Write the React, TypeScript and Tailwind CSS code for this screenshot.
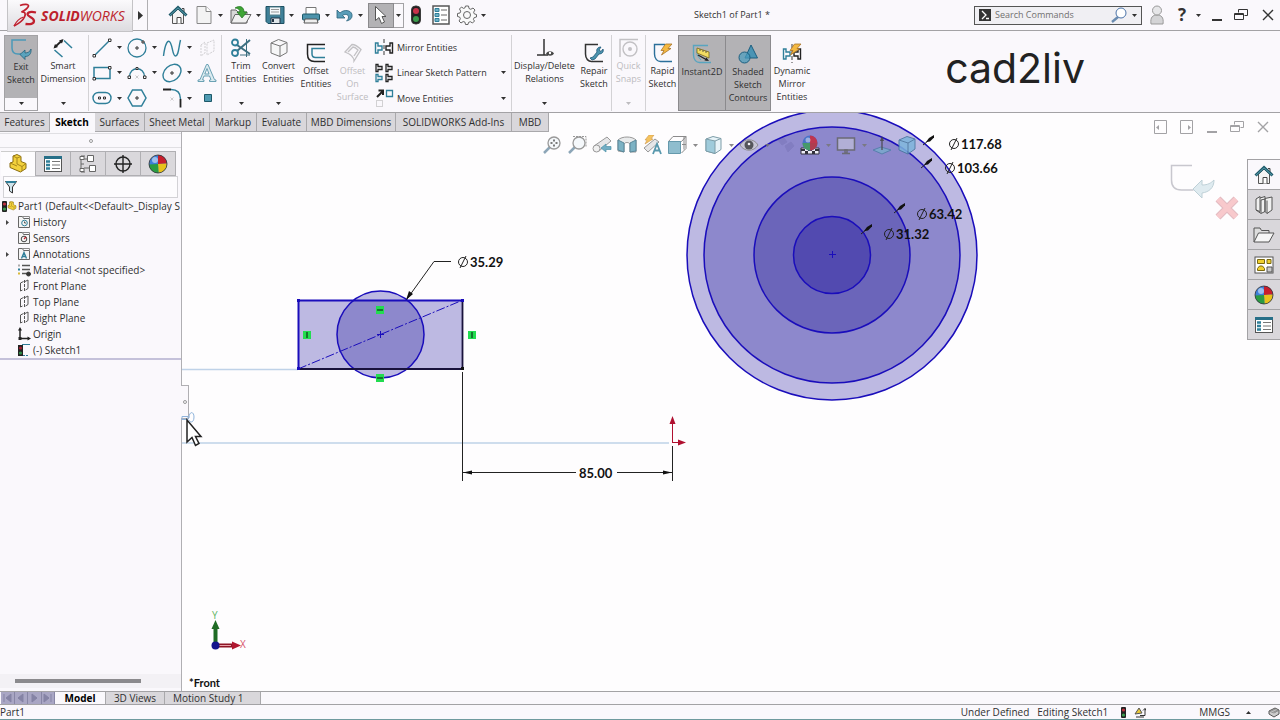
import type { ReactNode } from 'react'

function Svg({ w = 20, h = 20, children }: { w?: number; h?: number; children: ReactNode }) {
  return (
    <svg width={w} height={h} viewBox={`0 0 ${w} ${h}`} fill="none" stroke="#3b3b3b" className="shrink-0" aria-hidden="true">
      {children}
    </svg>
  )
}

function Caret() {
  return (
    <svg width="5" height="3" viewBox="0 0 5 3" className="shrink-0" aria-hidden="true">
      <path d="M0 0h5L2.5 3z" fill="currentColor" />
    </svg>
  )
}

const teal = '#2f7f99'
const dark = '#333'

/* shared icons */

function HomeIcon() {
  return (
    <Svg>
      <path d="M4.500 9v9.500h11V9L10 4z" fill="#f4f4f4" stroke="#555" />
      <path d="M14 3.500h2v4" stroke="#444" fill="#ddd" />
      <path d="M1.500 10.500 10 2.500l8.500 8" stroke="#1d5868" strokeWidth="3" />
      <path d="M2 10.200 10 2.800l8 7.400" stroke="#5ba3b3" strokeWidth="1" />
      <path d="M9 18.500v-6h4v6" stroke="#444" fill="#fff" />
    </Svg>
  )
}

function BallIcon({ size = 20 }: { size?: number }) {
  return (
    <svg width={size} height={size} viewBox="0 0 20 20" className="shrink-0" aria-hidden="true">
      <circle cx="10" cy="10" r="9" fill="#3d7fd8" />
      <path d="M10 10V1a9 9 0 0 1 9 8.500z" fill="#c81e2c" />
      <path d="M10 10l9-.5A9 9 0 0 1 10.500 19z" fill="#e8c21c" />
      <path d="M10 10l.5 9A9 9 0 0 1 1 10.500z" fill="#2a9c42" />
      <circle cx="7" cy="6" r="3" fill="#fff" opacity=".5" />
      <circle cx="10" cy="10" r="9" fill="none" stroke="#333" strokeWidth=".8" />
    </svg>
  )
}

function ListIcon() {
  return (
    <Svg>
      <rect x="1.500" y="2.500" width="17" height="15" fill="#fff" stroke="#555" />
      <path d="M1 3.500h18" stroke="#276f88" strokeWidth="3" />
      <path d="M3 7.500h4M3 11h4M3 14.500h4" stroke={teal} strokeWidth="2.400" />
      <path d="M9 7.500h8M9 11h8M9 14.500h8" stroke="#777" />
    </Svg>
  )
}

function PropertiesIcon() {
  return (
    <Svg>
      <rect x="2" y="1" width="16" height="18" fill="#fff" stroke="#555" strokeWidth="1.500" />
      <path d="M4 3.500h4v3H4zM4 8.500h4v3H4zM4 13.500h4v3H4z" fill="#6fb0c6" stroke={teal} />
      <path d="M10 5h6M10 10h6M10 15h6" stroke="#666" />
    </Svg>
  )
}

function TrafficLight() {
  return (
    <Svg w={10} h={20}>
      <rect x=".5" y="1" width="9" height="18" rx="4" fill="#222" />
      <circle cx="5" cy="6" r="3" fill="#c8324a" stroke="none" />
      <circle cx="5" cy="14" r="3" fill="#3a9c4c" stroke="none" />
    </Svg>
  )
}

function RestoreIcon() {
  return (
    <Svg w={14} h={12}>
      <path d="M4.500 3.500v-3h9v6h-3M.5 4.500h9v6h-9zM.5 5.500h9" stroke="currentColor" />
    </Svg>
  )
}

function CloseIcon() {
  return (
    <Svg w={12} h={12}>
      <path d="M1 1l10 10M11 1 1 11" stroke="currentColor" strokeWidth="1.400" />
    </Svg>
  )
}

function MinIcon() {
  return (
    <Svg w={12} h={12}>
      <path d="M1 11h10" stroke="currentColor" strokeWidth="2" />
    </Svg>
  )
}

/* title bar */

function Logo() {
  return (
    <div className="relative z-10 ml-[7px] flex h-8 w-[126px] shrink-0 items-center gap-1 self-start border-r border-b border-l border-[#c4c3c6] bg-gradient-to-b from-[#fbfafc] to-[#dddce0] pl-1">
      <svg width="25" height="26" viewBox="0 0 25 26" fill="none" stroke="#c0202e" strokeWidth="1.700" aria-hidden="true">
        <path d="M8 2.500c4-1.500 9-1.500 8.500.5-.5 2-4 4.500-7 6" />
        <path d="M9.500 9c3.500-.5 4.500 1.500 3 5-1.500 3.300-5.500 6.500-10.500 9" />
        <path d="M2 23c2-4 6-8 9.500-9" strokeWidth="1.200" />
        <path d="M24 9.500c-5-1.200-8.500-.5-8.500 1.800 0 2.500 6.500 3.200 6.500 6.700 0 3-4 3.500-8.500 3" strokeWidth="2.300" />
      </svg>
      <span className="text-[14px] leading-4 text-[#bd1f2d] italic">
        <b>SOLID</b>WORKS
      </span>
    </div>
  )
}

const fileTools: { name: string; box: string; caret: boolean; icon: ReactNode }[] = [
  { name: 'Home', box: 'w-[22px]', caret: false, icon: <HomeIcon /> },
  {
    name: 'New',
    box: 'w-[36px]',
    caret: true,
    icon: (
      <Svg>
        <path d="M3 1.500h9l5 5v12H3z" fill="#f3f3f3" stroke="#888" />
        <path d="M12 1.500v5h5" stroke="#888" fill="#fff" />
      </Svg>
    ),
  },
  {
    name: 'Open',
    box: 'w-[35px]',
    caret: true,
    icon: (
      <Svg w={22}>
        <path d="M1 5h5l2 2h9v11H1z" fill="#d8d8d8" stroke="#666" />
        <path d="M1 18 5 9.500h16L16 18z" fill="#f0f0f0" stroke="#666" />
        <path d="M5 3c5-3 9-1 9 4h3l-5 6-5-6h3c0-2-2-4-5-4z" fill="#3fa535" stroke="#1f7020" strokeWidth=".7" />
      </Svg>
    ),
  },
  {
    name: 'Save',
    box: 'w-[36px]',
    caret: true,
    icon: (
      <Svg>
        <path d="M1 1.500h18v17H3l-2-2z" fill="#3f8098" stroke="#1d5062" />
        <path d="M4.500 2h11v8h-11z" fill="#f4f8fa" stroke="#57808c" />
        <path d="M6 4.500h8M6 7h8" stroke="#999" />
        <path d="M6 13h9v5.500H6z" fill="#dfe6ea" stroke="#234" />
        <path d="M8 14v3" stroke="#234" strokeWidth="2" />
      </Svg>
    ),
  },
  {
    name: 'Print',
    box: 'w-[35px]',
    caret: true,
    icon: (
      <Svg>
        <path d="M5 9V2.500h10V9" fill="#fff" stroke="#777" />
        <rect x="1.500" y="9" width="17" height="6" rx="1" fill="#4d93ab" stroke="#1d5868" />
        <path d="M4 14h12l1 4H3z" fill="#eee" stroke="#555" />
      </Svg>
    ),
  },
  {
    name: 'Undo',
    box: 'w-[35px]',
    caret: true,
    icon: (
      <Svg w={18}>
        <path d="M1 5v8h8L6.500 10.500c3-2 6-1 6 1.500 0 2-1 3-2 4 4-1 6-3 5.500-6.500C15 5 8 4 4 8z" fill="#5a9db8" stroke="#27617a" strokeWidth=".8" />
      </Svg>
    ),
  },
]

function TitleBar() {
  return (
    <header className="flex h-[31px] shrink-0 items-center border-b border-[#a3a2a5] bg-[#faf8fc] text-[9px]">
      <div className="flex h-full w-[490px] shrink-0 items-center">
        <Logo />
        <button aria-label="Show menus" className="flex w-[14px] justify-center">
          <svg width="5" height="9" viewBox="0 0 5 9" aria-hidden="true">
            <path d="M0 0v9l5-4.500z" fill="#333" />
          </svg>
        </button>
        <div className="mr-[20px] h-full w-px bg-[#b0afb2]" />
        {fileTools.map(t => (
          <button key={t.name} aria-label={t.name} className={`flex shrink-0 items-center gap-1 ${t.box} ${t.caret ? 'pl-1' : ''}`}>
            {t.icon}
            {t.caret && <Caret />}
          </button>
        ))}
        <button aria-label="Select" className="ml-px flex h-[25px] w-[26px] shrink-0 items-center justify-center border border-[#8b8a8d] bg-[#b3b2b5]">
          <Svg w={14} h={20}>
            <path d="M1.500 1.500v14l3.500-3 2.500 6 3-1.500-2.500-5.500H12z" fill="#fff" stroke="#555" />
          </Svg>
        </button>
        <button aria-label="Select options" className="flex h-[25px] w-[10px] shrink-0 items-center justify-center border border-l-0 border-[#a3a2a5]">
          <Caret />
        </button>
        <button aria-label="Rebuild" className="ml-[7px]">
          <TrafficLight />
        </button>
        <button aria-label="File properties" className="ml-[10px]">
          <PropertiesIcon />
        </button>
        <button aria-label="Options" className="ml-[6px] flex items-center gap-1">
          <Svg>
            <path
              d="M8.500 1h3l.5 2.500 1.800.8L16 3l2 2-1.400 2.200.8 1.800 2.100.5v2.500l-2.300.6-.8 1.800L17.500 16l-2 2-2.200-1.300-1.800.7L11 19.500H8.500L8 17.200l-1.800-.7L4 18l-2-2 1.400-2.200-.8-1.800L.5 11.500v-3L3 8l.7-1.800L2.500 4l2-2 2 1.400 1.500-.6z"
              stroke="#666"
              fill="#fafafa"
            />
            <circle cx="10" cy="10" r="3.500" stroke="#666" />
          </Svg>
          <Caret />
        </button>
      </div>
      <div className="flex-1 text-center">Sketch1 of Part1 *</div>
      <form className="flex h-[19px] w-[168px] shrink-0 items-center border border-[#555] bg-[#f0eff3] px-1">
        <Svg w={12} h={12}>
          <rect width="12" height="12" fill="#333" stroke="none" />
          <path d="M3 2l4 4-4 4M7 9.500h3" stroke="#fff" strokeWidth="1.300" />
        </Svg>
        <input aria-label="Search Commands" placeholder="Search Commands" className="ml-1 w-0 flex-1 bg-transparent outline-none placeholder:text-[#707070]" />
        <button aria-label="Search" className="flex items-center gap-1">
          <Svg w={17} h={16}>
            <path d="M7 10 1 15" stroke="#6a8bb0" strokeWidth="2.400" />
            <circle cx="10" cy="6" r="5" fill="#fff" stroke="#4a72a8" />
          </Svg>
          <Caret />
        </button>
      </form>
      <div className="flex w-[138px] shrink-0 items-center text-[#333]">
        <button aria-label="Account" className="ml-[8px]">
          <Svg w={14} h={20}>
            <path d="M1 19c-1-7 2-9 6-9s7 2 6 9z" fill="#d4d4d6" stroke="#999" />
            <circle cx="7" cy="5.500" r="4.500" fill="#e6e6e8" stroke="#999" />
          </Svg>
        </button>
        <button aria-label="Help" className="ml-[14px] flex items-center gap-[10px] text-[17px] leading-5 font-bold">
          ? <Caret />
        </button>
        <button aria-label="Minimize" className="ml-auto">
          <MinIcon />
        </button>
        <button aria-label="Restore" className="ml-[11px]">
          <RestoreIcon />
        </button>
        <button aria-label="Close" className="mr-[6px] ml-[14px]">
          <CloseIcon />
        </button>
      </div>
    </header>
  )
}

/* ribbon */

const sketchIcons: { name: string; caret?: boolean; icon: ReactNode }[] = [
  {
    name: 'Line',
    caret: true,
    icon: (
      <Svg>
        <path d="M2 18 18 2" stroke={teal} strokeWidth="1.500" />
        <path d="M1 16.500h2.500V19H1zM16.500 1H19v2.500h-2.500z" fill="#fff" stroke={dark} />
      </Svg>
    ),
  },
  {
    name: 'Circle',
    caret: true,
    icon: (
      <Svg>
        <circle cx="10" cy="10" r="9" stroke={teal} strokeWidth="1.300" />
        <path d="M9 9h2v2H9zM15 3h2v2h-2z" stroke={dark} fill="#fff" />
      </Svg>
    ),
  },
  {
    name: 'Spline',
    caret: true,
    icon: (
      <Svg>
        <path d="M1.500 18C3 6 6 0 8.500 5s2 13 5 13 3-8 5-16" stroke={teal} strokeWidth="1.400" />
      </Svg>
    ),
  },
  {
    name: 'Plane',
    icon: (
      <Svg>
        <path d="M4 7l4-3v11l-4 3zM10 5l7-3v11l-7 4z" stroke="#d0cfd2" strokeDasharray="2 1" />
      </Svg>
    ),
  },
  {
    name: 'Rectangle',
    caret: true,
    icon: (
      <Svg>
        <path d="M2 4.500h16v11H2z" stroke={teal} strokeWidth="1.500" />
        <path d="M1 14.500h2.500V17H1zM16.500 3.500H19V6h-2.500z" fill="#fff" stroke={dark} />
      </Svg>
    ),
  },
  {
    name: 'Arc',
    caret: true,
    icon: (
      <Svg>
        <path d="M2.500 14c0-11 15-11 15 0" stroke={teal} strokeWidth="1.400" />
        <path d="M1 13h2.500v2.500H1zM16.500 13H19v2.500h-2.500zM9 4.500h2v2H9z" stroke={dark} fill="#fff" />
        <path d="M8.500 12.500l3 3m0-3-3 3" stroke="#aaa" strokeWidth=".6" />
      </Svg>
    ),
  },
  {
    name: 'Ellipse',
    caret: true,
    icon: (
      <Svg>
        <ellipse cx="10" cy="10" rx="10" ry="7.500" transform="rotate(-42 10 10)" stroke={teal} strokeWidth="1.400" />
        <path d="M9 9h2v2H9z" stroke={dark} />
      </Svg>
    ),
  },
  {
    name: 'Text',
    icon: (
      <Svg>
        <path d="M1 18.500h6v-1.500l-1.500-.3L7 13h5.500l1.500 3.700-1.500.3v1.500H19V17l-1.500-.3L11 1.500H9.500L3 16.700 1 17zM7.800 11 10 5.500l2 5.500z" stroke="#5c98ad" fill="#dcebf0" strokeWidth=".9" />
      </Svg>
    ),
  },
  {
    name: 'Slot',
    caret: true,
    icon: (
      <Svg>
        <rect x="1" y="4.500" width="18" height="11" rx="5.500" stroke={teal} strokeWidth="1.400" />
        <path d="M6.500 9h2v2h-2zM11.500 9h2v2h-2z" stroke={dark} />
      </Svg>
    ),
  },
  {
    name: 'Polygon',
    icon: (
      <Svg>
        <path d="M5.500 2h9L19 10l-4.500 8h-9L1 10z" stroke={teal} strokeWidth="1.500" />
        <path d="M9 9h2v2H9z" stroke={dark} />
      </Svg>
    ),
  },
  {
    name: 'Fillet',
    caret: true,
    icon: (
      <Svg>
        <path d="M1 1.500h8M18.500 11v8.500" stroke="#222" strokeWidth="1.800" />
        <path d="M9 1.500c6 0 9.500 3 9.500 9.500" stroke={teal} strokeWidth="1.400" />
        <path d="M8.500 9.500l3 3m0-3-3 3" stroke="#aaa" strokeWidth=".6" />
      </Svg>
    ),
  },
  {
    name: 'Point',
    icon: (
      <Svg>
        <path d="M7.500 6.500h7v7h-7z" fill="#4f9ab2" stroke="#1d5868" />
      </Svg>
    ),
  },
]

const bolt = <path d="M12.500 1h6.500l-4 4.500h3L8.500 12l2.500-4.500H8z" fill="#f4b942" stroke="#a8742a" strokeWidth=".8" />

type Command = {
  label: string[]
  box: string
  icon: ReactNode
  menu?: boolean
  state?: 'on' | 'off'
  rule?: boolean
}

const leading: Command[] = [
  {
    label: ['Smart', 'Dimension'],
    box: 'w-[50px]',
    menu: true,
    rule: true,
    icon: (
      <Svg>
        <path d="M2 9 9 2.500" stroke="#222" strokeWidth="1.800" />
        <path d="M.5 10.500 2 6l3 3zM10.500 1 6 2.500 9 5.500z" fill="#222" stroke="none" />
        <path d="M11 2.500 19 10M1.500 12l8 7" stroke={teal} strokeWidth="1.500" />
      </Svg>
    ),
  },
]

const modify: Command[] = [
  {
    label: ['Trim', 'Entities'],
    box: 'w-[38px]',
    menu: true,
    icon: (
      <Svg>
        <path d="M6 7l13 9M6 13 19 2" stroke="#3c6f80" strokeWidth="2" />
        <circle cx="4" cy="4.500" r="3" stroke={teal} strokeWidth="1.800" />
        <circle cx="4" cy="15" r="3" stroke={teal} strokeWidth="1.800" />
        <path d="M15.500 1v18M9 17h10" stroke="#3c6f80" />
      </Svg>
    ),
  },
  {
    label: ['Convert', 'Entities'],
    box: 'w-[37px]',
    menu: true,
    icon: (
      <Svg>
        <path d="M2 5 9.500 1.500 18 4.500v10L11 18.500 2 15zM2 5l9 3 7-3.500M11 8v10.500" fill="#f6f6f7" stroke="#777" />
      </Svg>
    ),
  },
  {
    label: ['Offset', 'Entities'],
    box: 'w-[38px]',
    icon: (
      <Svg>
        <path d="M19 1.500H1.500V11c0 5 3 7.500 7 7.500H19" stroke="#222" strokeWidth="1.500" />
        <path d="M19 5.500H6V11c0 2 1 3.500 3.500 3.500H19" stroke={teal} strokeWidth="1.500" />
      </Svg>
    ),
  },
  {
    label: ['Offset', 'On', 'Surface'],
    box: 'w-[35px]',
    state: 'off',
    icon: (
      <Svg>
        <path d="M2 9 9 1.500c3 0 6 2 9 5L11 18c0-4-4-7-9-9zM5 9l5-5c2 0 3 1 5 3l-4 6" stroke="#c2c1c4" strokeWidth="1.300" />
      </Svg>
    ),
  },
]

const patterns: { name: string; caret: boolean; icon: ReactNode }[] = [
  {
    name: 'Mirror Entities',
    caret: false,
    icon: (
      <Svg>
        <path d="M1.500 5H4v3h4v4H4v3H1.500z" stroke={teal} strokeWidth="1.400" />
        <path d="M18.500 5H16v3h-4v4h4v3h2.500z" stroke="#222" strokeWidth="1.400" />
        <path d="M10 1v18" strokeDasharray="4 2" />
      </Svg>
    ),
  },
  {
    name: 'Linear Sketch Pattern',
    caret: true,
    icon: (
      <Svg>
        <path d="M2 1.500h2v2h4v3H4v2H2zM12 1.500h2v2h4v3h-4v2h-2zM12 11.500h2v2h4v3h-4v2h-2z" stroke="#222" strokeWidth="1.300" />
        <path d="M2 11.500h2v2h4v3H4v2H2z" stroke={teal} strokeWidth="1.300" />
      </Svg>
    ),
  },
  {
    name: 'Move Entities',
    caret: true,
    icon: (
      <Svg>
        <path d="M3 9 9 3M4.500 2.500H9V7" stroke="#222" strokeWidth="2" />
        <path d="M12.500 2.500h6v6h-6z" stroke={teal} strokeWidth="1.300" />
        <path d="M2.500 12.500h6v6h-6z" stroke="#aaa" strokeDasharray="1 1" />
      </Svg>
    ),
  },
]

const trailing: Command[] = [
  {
    label: ['Display/Delete', 'Relations'],
    box: 'w-[65px]',
    menu: true,
    icon: (
      <Svg>
        <path d="M9 1v16M2 17h11" stroke="#333" strokeWidth="1.500" />
        <path d="M11 15.500c2-3 6-3 8 0-2 3-6 3-8 0z" fill="#444" stroke="none" />
        <circle cx="15" cy="15" r="1.200" fill="#fff" stroke="none" />
      </Svg>
    ),
  },
  {
    label: ['Repair', 'Sketch'],
    box: 'w-[34px]',
    rule: true,
    icon: (
      <Svg>
        <path d="M14 1.500H1.500V11c0 5 3 7.500 6 7.500H19" stroke="#333" strokeWidth="1.500" />
        <path d="M6 15l3-1 4-5c-1-3 1-5 4-5l-2 3 2 1.500 2-2.500c1 3-1 5-4 5l-4 5-3 1z" fill="#4b93ae" stroke="#1d5878" strokeWidth=".8" />
      </Svg>
    ),
  },
  {
    label: ['Quick', 'Snaps'],
    box: 'w-[33px]',
    menu: true,
    state: 'off',
    rule: true,
    icon: (
      <Svg>
        <path d="M1 19V1.500h18" stroke="#c2c1c4" strokeWidth="1.400" />
        <circle cx="11" cy="11" r="7" stroke="#c2c1c4" strokeWidth="1.400" />
        <circle cx="11" cy="11" r="2" fill="#c2c1c4" stroke="none" />
      </Svg>
    ),
  },
  {
    label: ['Rapid', 'Sketch'],
    box: 'w-[33px]',
    icon: (
      <Svg>
        <path d="M12 1.500H1.500V11c0 5 3 7.500 6 7.500H19" stroke="#2b6f9a" strokeWidth="1.400" />
        {bolt}
      </Svg>
    ),
  },
  {
    label: ['Instant2D'],
    box: 'w-[48px]',
    state: 'on',
    icon: (
      <Svg>
        <path d="M16 1.500H1.500V11c0 5 3 7.500 6 7.500H19" stroke="#58a5c0" strokeWidth="1.400" />
        <path d="M5 5v6l4 5" stroke="#58a5c0" />
        <path d="M5 4l12 4v6L5 9z" fill="#f3dc62" stroke="#7a6a18" strokeWidth=".8" />
        <path d="M8 5v2M11 6v2M14 7v2" stroke="#444" strokeWidth=".8" />
        <path d="M6 11l9 5" stroke="#222" strokeWidth="1.400" />
        <path d="M17 17l-4.500-.5 2-3z" fill="#222" stroke="none" />
      </Svg>
    ),
  },
  {
    label: ['Shaded', 'Sketch', 'Contours'],
    box: 'w-[46px]',
    state: 'on',
    icon: (
      <Svg>
        <path d="M13 1 19.500 14H7z" fill="#4a94b4" stroke="#1d5f80" />
        <circle cx="6.500" cy="13.500" r="5.500" fill="#4a9cbf" fillOpacity=".7" stroke="#1d5f80" />
      </Svg>
    ),
  },
  {
    label: ['Dynamic', 'Mirror', 'Entities'],
    box: 'w-[42px]',
    icon: (
      <Svg>
        <path d="M1.500 6H4v3h4v4H4v3H1.500z" stroke={teal} strokeWidth="1.400" />
        <path d="M18.500 6H16v3h-4v4h4v3h2.500z" stroke="#222" strokeWidth="1.400" />
        <path d="M10 1v19" strokeDasharray="4 2" />
        {bolt}
      </Svg>
    ),
  },
]

const stateStyles = {
  on: 'border border-[#8b8a8d] bg-[#b3b2b5] -ml-px',
  off: 'text-[#bdbcbf]',
  none: '',
}

function Rule() {
  return <div className="h-[76px] w-px shrink-0 bg-[#d3d2d5]" />
}

function CommandButton({ cmd }: { cmd: Command }) {
  return (
    <>
      <button className={`flex h-[76px] shrink-0 flex-col items-center text-center leading-[13px] ${cmd.box} ${stateStyles[cmd.state ?? 'none']} ${cmd.menu ? 'pt-[3px]' : 'pt-[8px]'}`}>
        {cmd.icon}
        <span className="mt-px">
          {cmd.label.map(l => (
            <span key={l} className="block whitespace-nowrap">
              {l}
            </span>
          ))}
        </span>
        {cmd.menu && (
          <span className="mt-auto mb-[6px]">
            <Caret />
          </span>
        )}
      </button>
      {cmd.rule && <Rule />}
    </>
  )
}

function Ribbon() {
  return (
    <section className="flex h-[82px] shrink-0 items-start border-b border-[#a3a2a5] bg-[#faf8fc] pt-1 text-[9px]">
      <button className="ml-1 flex h-[76px] w-[34px] shrink-0 flex-col items-center border border-[#a3a2a5] leading-[13px]">
        <span className="flex h-[62px] w-full flex-col items-center bg-[#b3b2b5] pt-[2px]">
          <Svg w={22} h={22}>
            <path d="M16 2H2v8c0 4 2 6 6 6h3" stroke="#4b99b8" strokeWidth="1.500" />
            <path d="M10 16.500 15 12v3c3 0 5-1.500 6-4 .5 5-2 7.500-6 7.500v3z" fill="#5aa3bd" stroke="#27617a" strokeWidth=".8" />
          </Svg>
          <span>Exit</span>
          <span>Sketch</span>
        </span>
        <span className="mt-[4px]">
          <Caret />
        </span>
      </button>
      {leading.map(c => (
        <CommandButton key={c.label[0]} cmd={c} />
      ))}
      <div className="grid h-[76px] shrink-0 grid-cols-[35px_35px_35px_24px] grid-rows-3 items-center pl-[3px]">
        {sketchIcons.map(s => (
          <button key={s.name} aria-label={s.name} className="flex items-center gap-[5px]">
            {s.icon}
            {s.caret && <Caret />}
          </button>
        ))}
      </div>
      <Rule />
      {modify.map(c => (
        <CommandButton key={c.label.join(' ')} cmd={c} />
      ))}
      <div className="ml-[4px] grid h-[76px] w-[137px] shrink-0 grid-rows-3 items-center">
        {patterns.map(p => (
          <button key={p.name} className="flex items-center gap-[3px]">
            {p.icon}
            <span className="flex-1 text-left whitespace-nowrap">{p.name}</span>
            {p.caret && <Caret />}
            <span className="w-[2px]" />
          </button>
        ))}
      </div>
      <Rule />
      {trailing.map(c => (
        <CommandButton key={c.label.join(' ')} cmd={c} />
      ))}
      <div className="flex-1 pr-[195px] text-right font-['Inter',sans-serif] text-[41px] leading-[66px] font-normal text-[#222]">cad2liv</div>
    </section>
  )
}

const ribbonTabs = [
  { name: 'Features', box: 'w-[50px]' },
  { name: 'Sketch', box: 'w-[45px]' },
  { name: 'Surfaces', box: 'w-[50px]' },
  { name: 'Sheet Metal', box: 'w-[65px]' },
  { name: 'Markup', box: 'w-[47px]' },
  { name: 'Evaluate', box: 'w-[50px]' },
  { name: 'MBD Dimensions', box: 'w-[89px]' },
  { name: 'SOLIDWORKS Add-Ins', box: 'w-[116px]' },
  { name: 'MBD', box: 'w-[37px]' },
]

function RibbonTabs() {
  return (
    <nav className="flex h-[19px] shrink-0">
      {ribbonTabs.map(t => (
        <button
          key={t.name}
          className={`${t.box} border-r text-[10px] leading-[17px] whitespace-nowrap ${
            t.name === 'Sketch' ? 'border-transparent bg-[#faf8fc] font-bold text-black' : 'border-b border-[#a9a8ab] bg-[#d9d7db]'
          }`}
        >
          {t.name}
        </button>
      ))}
    </nav>
  )
}

/* feature tree */

function FolderIcon({ children }: { children: ReactNode }) {
  return (
    <Svg w={14} h={14}>
      <path d="M1.500 12.500v-11h4l1 2h6v9z" fill="#f4f4f4" stroke="#666" />
      <path d="M6 1.500h6.500v2" stroke="#888" />
      {children}
    </Svg>
  )
}

function PartIcon({ size = 20 }: { size?: number }) {
  return (
    <svg width={size} height={size} viewBox="0 0 20 20" className="shrink-0" aria-hidden="true">
      <path d="M5 2l4-1.500 4 2v5l5 2v5L12.500 18 2 13.500V9l3-1z" fill="#f2d13c" stroke="#8a6d10" />
      <path d="M5 2l4 2v6l5 2.500V17M9 4l4-1.500M14 12.500l4-3M2 9l7 3" stroke="#a8871a" fill="none" />
    </svg>
  )
}

function SmallLight() {
  return (
    <Svg w={5} h={11}>
      <rect width="5" height="11" rx="1" fill="#222" stroke="none" />
      <circle cx="2.500" cy="3" r="1.600" fill="#c0303f" stroke="none" />
      <circle cx="2.500" cy="8" r="1.600" fill="#3a9c4c" stroke="none" />
    </Svg>
  )
}

const planeIcon = (
  <Svg w={14} h={14}>
    <path d="M3.500 4v8M3.500 4l3-1.500M3.500 12l2-1M8 2.500l3-1.500v8.500L8.500 11" stroke="#555" />
    <path d="M7.500 1v12" stroke="#555" strokeDasharray="3 1" />
  </Svg>
)

const tree: { name: string; expands?: boolean; icon: ReactNode }[] = [
  {
    name: 'History',
    expands: true,
    icon: (
      <FolderIcon>
        <circle cx="7.500" cy="8" r="2.800" stroke={teal} />
        <path d="M7.500 6.500V8H9" stroke={dark} strokeWidth=".8" />
      </FolderIcon>
    ),
  },
  {
    name: 'Sensors',
    icon: (
      <FolderIcon>
        <circle cx="7" cy="8" r="2.800" stroke="#444" />
        <path d="M7 8l2-2" stroke="#c0202e" strokeWidth="1.200" />
      </FolderIcon>
    ),
  },
  {
    name: 'Annotations',
    expands: true,
    icon: (
      <FolderIcon>
        <path d="M4.500 11.500 7 5.500l2.500 6M5.500 9.500h3" stroke={teal} strokeWidth="1.400" />
      </FolderIcon>
    ),
  },
  {
    name: 'Material <not specified>',
    icon: (
      <Svg w={14} h={14}>
        <path d="M5 2.500h8M5 6.500h8M5 10.500h5" stroke="#555" strokeWidth="1.500" />
        <path d="M1 2.500h2" stroke="#aaa" strokeWidth="2" />
        <path d="M1 6.500h2" stroke={teal} strokeWidth="2" />
        <path d="M1 10.500h2" stroke="#d8b838" strokeWidth="2" />
        <circle cx="11.500" cy="11" r="2" fill="#333" />
      </Svg>
    ),
  },
  { name: 'Front Plane', icon: planeIcon },
  { name: 'Top Plane', icon: planeIcon },
  { name: 'Right Plane', icon: planeIcon },
  {
    name: 'Origin',
    icon: (
      <Svg w={14} h={14}>
        <path d="M3 2v9.500h9" stroke="#222" strokeWidth="1.500" />
        <path d="M3 0l2 3.500H1zM14 11.500 10.500 9.500v4zM1.500 10h3v3h-3z" fill="#222" stroke="none" />
      </Svg>
    ),
  },
  {
    name: '(-) Sketch1',
    icon: (
      <Svg w={14} h={14}>
        <path d="M5 1.500h8" stroke={teal} />
        <path d="M6 12.500h6" stroke={teal} strokeDasharray="2 1" />
        <rect x="1" y="2" width="5" height="11" fill="#222" stroke="none" />
        <circle cx="3.500" cy="5" r="1.600" fill="#a02030" stroke="none" />
        <circle cx="3.500" cy="10" r="1.600" fill="#2f8f48" stroke="none" />
      </Svg>
    ),
  },
]

const panelTabs: { name: string; icon: ReactNode }[] = [
  { name: 'FeatureManager', icon: <PartIcon /> },
  { name: 'PropertyManager', icon: <ListIcon /> },
  {
    name: 'ConfigurationManager',
    icon: (
      <Svg>
        <path d="M7 2H3v16h4M3 10h3M6 5h4M6 14h5" stroke="#666" />
        <path d="M2 2.500h4v3H2zM2 14.500h4v3H2zM9.500 1.500h6v6h-6zM11.500 11.500h6v6h-6z" fill="#fff" stroke="#666" />
      </Svg>
    ),
  },
  {
    name: 'DimXpertManager',
    icon: (
      <Svg>
        <circle cx="10" cy="10" r="7" stroke="#222" strokeWidth="1.400" />
        <path d="M10 1v18M1 10h18" stroke="#222" strokeWidth="1.400" />
      </Svg>
    ),
  },
  { name: 'DisplayManager', icon: <BallIcon /> },
]

function FeaturePanel() {
  return (
    <aside className="relative flex w-[182px] shrink-0 flex-col border-r border-[#b0afb3] bg-[#faf8fc]">
      <div className="mt-px flex h-[15px] items-center justify-center border-y border-[#e0dfe3]">
        <span className="size-1 rounded-full border border-[#999]" />
      </div>
      <div className="mt-[3px] flex h-[25px] pl-px">
        {panelTabs.map((t, i) => (
          <button
            key={t.name}
            aria-label={t.name}
            className={`flex w-[35px] items-center justify-center border-t border-r border-[#b0afb3] ${i === 0 ? 'border-t-[#ccc] bg-[#fdfcfe]' : 'border-b bg-[#dad8dc]'}`}
          >
            {t.icon}
          </button>
        ))}
      </div>
      <label className="mr-[3px] ml-[3px] flex h-[22px] items-center border border-[#d3d2d6] bg-[#fdfcfe] pl-px">
        <Svg w={12} h={14}>
          <path d="M.5 1.500h11L7.500 7v6l-3-2V7z" fill="#cfe3ea" stroke="#333" />
          <path d="M1 2h10" stroke={teal} strokeWidth="2" />
        </Svg>
        <input aria-label="Filter tree" className="w-0 flex-1 bg-transparent text-[10px] outline-none" />
      </label>
      <ul className="border-b-2 border-[#c4c1da] text-[10px] leading-4">
        <li className="flex h-4 items-center pl-[2px] whitespace-nowrap">
          <SmallLight />
          <PartIcon size={10} />
          <span className="ml-px">Part1 (Default&lt;&lt;Default&gt;_Display S</span>
        </li>
        {tree.map(n => (
          <li key={n.name} className="flex h-4 items-center pl-[6px]">
            <span className="w-[11px]">
              {n.expands && (
                <svg width="3" height="5" viewBox="0 0 3 5" aria-hidden="true">
                  <path d="M0 0v5l3-2.500z" fill="#444" />
                </svg>
              )}
            </span>
            {n.icon}
            <span className="ml-[2px] whitespace-nowrap">{n.name}</span>
          </li>
        ))}
      </ul>
      <div className="mt-auto mb-[3px] flex h-[14px] items-center bg-[#f3f1f5] pl-[15px]">
        <div className="h-1 w-[126px] bg-[#8b8a8d]" />
      </div>
      <button aria-label="Collapse panel" className="absolute top-[253px] -right-2 flex h-[34px] w-2 items-center justify-center border border-l-0 border-[#b0afb3] bg-[#faf8fc]">
        <span className="size-1 rounded-full border border-[#999]" />
      </button>
      <svg width="22" height="38" viewBox="0 0 22 38" fill="none" className="absolute top-[279px] -right-[22px]" aria-hidden="true">
        <path d="M1 5.500h6v3H1zM8 7c0-7 5-7 5-1s-4 6-5 3" stroke="#8fb4dc" />
        <path d="M6 9v22l5-4.500 3.500 8 3.500-2-3.500-7H20z" fill="#fff" stroke="#222" strokeWidth="1.500" />
      </svg>
    </aside>
  )
}

/* model view, drawn in window coordinates */

const blue = '#1a0dbb'

const rings = [
  { r: 145, fill: '#bdb9e2' },
  { r: 128, fill: '#8d88cc' },
  { r: 78, fill: '#6b65ba' },
  { r: 38.5, fill: '#524ab0' },
]

const dims = [
  { x: 948, y: 149, text: '117.68' },
  { x: 944, y: 173, text: '103.66' },
  { x: 916, y: 219, text: '63.42' },
  { x: 883, y: 239, text: '31.32' },
  { x: 457, y: 267, text: '35.29' },
]

const ticks = [
  [923, 145],
  [921, 168],
  [894, 213],
  [861, 234],
]

const relations = [
  { x: 303, y: 331, d: 'v6' },
  { x: 468, y: 331, d: 'v6' },
  { x: 376, y: 306, d: 'h6' },
  { x: 376, y: 374, d: 'h6' },
]

function Scene() {
  return (
    <svg className="absolute inset-0 size-full bg-[#fefdfe]" role="img" aria-label="Sketch on front plane">
      <g transform="translate(0 -113)" fill="none">
        {rings.map(c => (
          <circle key={c.r} cx="832" cy="255" r={c.r} fill={c.fill} stroke={blue} strokeWidth="1.500" />
        ))}
        <path d="M829 254.500h7M832.500 251v7" stroke={blue} />

        <path d="M182 369.500h116M182 443h487" stroke="#bfd2e8" strokeWidth="1.500" />
        <circle cx="380.500" cy="334.500" r="43.500" fill="#bdb9e2" />
        <rect x="298" y="300" width="165" height="69" fill="#bdb9e2" />
        <clipPath id="plate">
          <rect x="298" y="300" width="165" height="69" />
        </clipPath>
        <circle cx="380.500" cy="334.500" r="43.500" fill="#8d88cc" clipPath="url(#plate)" />
        <circle cx="380.500" cy="334.500" r="43.500" stroke={blue} strokeWidth="1.500" />
        <path d="M298.500 369v-68.500h164" stroke={blue} strokeWidth="2" />
        <path d="M462.500 300v69h-164" stroke="#19123c" strokeWidth="1.800" />
        <path d="M298 369 463 300" stroke={blue} strokeDasharray="9 2 2 2" />
        <path d="M377 334.500h7M380.500 331v7" stroke={blue} />
        <path d="M297 299h3v3h-3zM461 299h3v3h-3zM297 367h3v3h-3z" fill={blue} />
        <path d="M461 367h3v3h-3z" fill="#111" />

        {relations.map(r => (
          <g key={`${r.x} ${r.y}`}>
            <rect x={r.x} y={r.y} width="8" height="8" fill="#22dc50" />
            <path d={r.d === 'v6' ? `M${r.x + 4} ${r.y + 1}v6` : `M${r.x + 1} ${r.y + 4}h6`} stroke="#115522" strokeWidth="1.500" />
          </g>
        ))}

        <g stroke="#222">
          <path d="M451 261.500h-17L407 299" />
          <path d="M462.500 372v109M672.500 446v35M463 472.500h113M617 472.500h55" />
          {ticks.map(([x, y]) => (
            <path key={x} d={`M${x} ${y}l10-8`} />
          ))}
        </g>
        <g fill="#111">
          <path d="M406 300l3-9 4 3zM463 472.500l9-2v4zM672 472.500l-9-2v4z" />
          {ticks.map(([x, y]) => (
            <path key={x} d={`M${x + 3} ${y - 3}l3-4 5-3v2.500l-4 4z`} />
          ))}
        </g>
        {dims.map(d => (
          <g key={d.text} fill="#111">
            <circle cx={d.x + 6} cy={d.y - 5} r="4.500" stroke="#222" fill="none" />
            <path d={`M${d.x + 3} ${d.y + 1}l6-12`} stroke="#222" />
            <text x={d.x + 13} y={d.y} className="font-['Lato'] text-[13px] font-bold">
              {d.text}
            </text>
          </g>
        ))}
        <text x="579" y="478" fill="#111" className="font-['Lato'] text-[13px] font-bold">
          85.00
        </text>

        <g stroke="#b01030" fill="#b01030">
          <path d="M672.500 443v-20M672 442.500h8" />
          <path d="M672.500 416l3 8h-6zM686 442.500l-8-3v6z" stroke="none" />
        </g>

        <path d="M215.500 643v-14" stroke="#1f6b24" strokeWidth="4" />
        <path d="M215.500 620l4 9h-8z" fill="#1f6b24" />
        <path d="M216 645.500h16" stroke="#8e1425" strokeWidth="4" />
        <path d="M217 645.500h14" stroke="#e8a0a8" />
        <path d="M241 645.500l-9-4v8z" fill="#b01830" />
        <circle cx="215.500" cy="645.500" r="4" fill="#14148c" />
        <text x="212" y="619" fill="#5db564" className="text-[10px]">Y</text>
        <text x="240" y="648" fill="#d8546a" className="text-[10px]">X</text>
        <text x="189" y="687" fill="#111" className="font-['Lato'] text-[11px] font-bold">*Front</text>
      </g>
    </svg>
  )
}

const glass = <circle cx="12" cy="8" r="6" fill="#f4f8fb" stroke="#888" strokeWidth="1.300" />
const handle = <path d="M8 12 2 18" stroke="#7a98ac" strokeWidth="2.500" />

const viewTools: { name: string; caret?: boolean; faint?: boolean; icon: ReactNode }[] = [
  {
    name: 'Zoom to fit',
    icon: (
      <Svg>
        {handle}
        {glass}
        <path d="M12 4.500v2M12 9.500v2M8.500 8h2M13.500 8h2" stroke="#333" strokeWidth="1.500" />
      </Svg>
    ),
  },
  {
    name: 'Zoom to area',
    icon: (
      <Svg>
        <path d="M6 1.500h13v11" stroke="#888" strokeDasharray="2 1" />
        {handle}
        {glass}
      </Svg>
    ),
  },
  {
    name: 'Previous view',
    icon: (
      <Svg>
        <path d="M2 11 15 2l4 4L7 16z" fill="#e2e2e5" stroke="#888" />
        <circle cx="4.500" cy="13.500" r="3.500" fill="#eee" stroke="#888" />
        <path d="M9 13l5-4v2.500h5v3h-5V17z" fill="#5aa0ba" stroke="#2f7f99" strokeWidth=".7" />
      </Svg>
    ),
  },
  {
    name: 'Section view',
    icon: (
      <Svg>
        <path d="M1 5c4-4 14-4 18 0v12h-6V9c-1-2-5-2-6 0v8l-6-1z" fill="#e6e8ea" stroke="#888" />
        <path d="M1 5l6 3v9l-6-2zM13 8l6-3v11l-6 1z" fill="#66a5bb" stroke="#3c7388" />
      </Svg>
    ),
  },
  {
    name: 'Annotation views',
    icon: (
      <Svg>
        <path d="M2 13 13 4l4 3L6 17z" fill="#e2e2e5" stroke="#888" />
        <path d="M7 0h5L9 4h2L3 9l2-4H3z" fill="#f4b942" stroke="#c88830" strokeWidth=".6" />
        <path d="M11 19l4-10 4 10M12.500 15.500h5" stroke="#3c87a0" strokeWidth="1.800" />
      </Svg>
    ),
  },
  {
    name: 'View orientation',
    caret: true,
    icon: (
      <Svg>
        <path d="M1.500 6.500 6 1.500h13v12L14.500 18M14.500 6.500l4.500-5M1.500 6.500h13M15 9.500h4M17 1.500v13" stroke="#777" />
        <path d="M1.500 6.500h12v12h-12z" fill="#7cb2c6" stroke="#4b889e" />
      </Svg>
    ),
  },
  {
    name: 'Display style',
    caret: true,
    icon: (
      <Svg>
        <path d="M3 4l7-2.500 8 2v11L12 18.500 3 16z" fill="#e4f2f7" stroke="#668c99" />
        <path d="M3 4l9 2v12.500L3 16z" fill="#8fc3d6" stroke="#668c99" />
        <path d="M12 6l6-2.500" stroke="#668c99" />
      </Svg>
    ),
  },
  {
    name: 'Hide/show items',
    caret: true,
    icon: (
      <Svg>
        <path d="M1 10c4-7 14-7 18 0-4 7-14 7-18 0z" fill="#c9c8d4" stroke="#888" />
        <circle cx="10" cy="10" r="4.500" fill="#444" stroke="none" />
        <circle cx="10" cy="9" r="1.300" fill="#fff" stroke="none" />
      </Svg>
    ),
  },
  {
    name: 'Edit appearance',
    faint: true,
    icon: (
      <Svg>
        <path d="M3 5l6-2 3 4-5 3zM10 11l6-4 3 4-6 6z" fill="#6b67a8" stroke="#6b67a8" />
      </Svg>
    ),
  },
  {
    name: 'Apply scene',
    caret: true,
    icon: (
      <Svg>
        <path d="M1 13h18v6H1z" fill="#fff" stroke="#222" />
        <path d="M1 14h4v2H1zM8 14h4v2H8zM15 14h4v2h-4zM5 16h3v3H5zM12 16h3v3h-3z" fill="#222" stroke="none" />
        <circle cx="10" cy="8" r="7.500" fill="#3d6fc8" stroke="none" />
        <path d="M10 8V.5A7.500 7.500 0 0 1 17.500 8z" fill="#c8283a" stroke="none" />
        <path d="M10 8H2.500A7.500 7.500 0 0 0 10 15.500z" fill="#3a9c5a" stroke="none" />
        <path d="M10 8h7.500A7.500 7.500 0 0 1 10 15.500z" fill="#b5303a" stroke="none" />
        <circle cx="8" cy="5" r="2.500" fill="#fff" opacity=".5" stroke="none" />
      </Svg>
    ),
  },
  {
    name: 'View settings',
    caret: true,
    icon: (
      <Svg>
        <path d="M1.500 3h17v12h-17z" fill="#b9b6d8" stroke="#666" strokeWidth="1.500" />
        <path d="M9 15h2v3H9zM6 18.500h8" stroke="#666" strokeWidth="1.500" />
      </Svg>
    ),
  },
  {
    name: 'Normal to',
    icon: (
      <Svg>
        <path d="M1 15l8-3 10 3-9 4z" fill="#7ba9cc" stroke="#4f7fa8" />
        <path d="M10 15V4" stroke="#444" strokeWidth="1.300" />
        <path d="M10 1l2 5H8z" fill="#444" stroke="none" />
      </Svg>
    ),
  },
  {
    name: 'Isometric',
    icon: (
      <Svg>
        <path d="M2 5l8-3.500L18 4v10l-7 5-9-4z" fill="#7cb4dc" stroke="#46749c" />
        <path d="M2 5l9 3 7-4M11 8v11" stroke="#46749c" />
      </Svg>
    ),
  },
]

const taskTabs: { name: string; icon: ReactNode }[] = [
  { name: 'Resources', icon: <HomeIcon /> },
  {
    name: 'Design Library',
    icon: (
      <Svg>
        <path d="M2 4l4-2.500v15L2 15zM6 3l5-1.500v15l-4 2L2 15M7 5l4-1v13M11 3.500 18 2v13l-5 3.500-2-2M13 5.500v13M7 5v13" fill="#f0f0f0" stroke="#555" />
      </Svg>
    ),
  },
  {
    name: 'File Explorer',
    icon: (
      <Svg w={22}>
        <path d="M1 17V3h6l1.500 2.500H16V8" fill="#ddd" stroke="#555" />
        <path d="M1 17 5.500 8H21l-5 9z" fill="#f6f6f6" stroke="#555" />
      </Svg>
    ),
  },
  {
    name: 'View Palette',
    icon: (
      <Svg>
        <rect x="1" y="2" width="18" height="16" fill="#fff" stroke="#555" />
        <path d="M3.500 4.500h7v4h-7zM13 4.500h4v4h-4zM3.500 15.500v-2l2-2.500h3l2 2.500v2z" fill="#f0d030" stroke="#7a6810" />
        <path d="M13 12h5v5h-5z" fill="#ccc" stroke="#555" />
      </Svg>
    ),
  },
  { name: 'Appearances', icon: <BallIcon /> },
  { name: 'Custom Properties', icon: <ListIcon /> },
]

function Viewport() {
  return (
    <main className="relative flex flex-1 flex-col">
      <div className="mt-[2px] flex h-[22px] items-center justify-center gap-[5px] pr-1">
        {viewTools.map(t => (
          <button key={t.name} aria-label={t.name} className={`flex items-center gap-[6px] text-[#777] ${t.faint ? 'opacity-30' : 'opacity-85'}`}>
            {t.icon}
            {t.caret && <Caret />}
          </button>
        ))}
      </div>
      <div className="absolute -top-[12px] right-[11px] flex items-center text-[#a3a2a5]">
        <button aria-label="Previous document" className="mr-[13px]">
          <Svg w={13} h={14}>
            <path d="M12.500 13.500H.5V.5h12v13" stroke="currentColor" />
            <path d="M5 5v5L2 7.500z" fill="currentColor" stroke="none" />
          </Svg>
        </button>
        <button aria-label="Next document" className="mr-[13px]">
          <Svg w={13} h={14}>
            <path d="M12.500 13.500H.5V.5h12v13" stroke="currentColor" />
            <path d="M8 5v5l3-2.500z" fill="currentColor" stroke="none" />
          </Svg>
        </button>
        <button aria-label="Minimize document" className="mr-[12px]">
          <MinIcon />
        </button>
        <button aria-label="Restore document" className="mr-[13px]">
          <RestoreIcon />
        </button>
        <button aria-label="Close document">
          <CloseIcon />
        </button>
      </div>
      <button aria-label="Exit sketch" className="absolute top-[32px] right-[64px] opacity-35">
        <svg width="46" height="36" viewBox="0 0 46 36" fill="none" aria-hidden="true">
          <path d="M22 1.500H1.500V16c0 7 4 10 10 10h12" stroke="#667" strokeWidth="1.500" />
          <path d="M23 25l9-9v5c6 0 9-2 12-5 0 8-5 12-12 13v5z" fill="#a8ccd8" stroke="#4a7f90" />
        </svg>
      </button>
      <button aria-label="Cancel sketch" className="absolute top-[63px] right-[40px] opacity-35">
        <svg width="26" height="26" viewBox="0 0 26 26" fill="none" aria-hidden="true">
          <path d="M4 4l18 18M22 4 4 22" stroke="#b04050" strokeWidth="7" />
          <path d="M4 4l18 18M22 4 4 22" stroke="#ee6a72" strokeWidth="5" />
        </svg>
      </button>
      <div className="absolute top-[27px] right-0 flex w-[33px] flex-col border-t border-l border-[#a3a2a5]">
        {taskTabs.map((t, i) => (
          <button key={t.name} aria-label={t.name} className={`flex h-[30px] items-center justify-center border-b border-[#a3a2a5] ${i === 0 ? 'bg-[#faf8fc]' : 'bg-[#d9d7db]'}`}>
            {t.icon}
          </button>
        ))}
      </div>
    </main>
  )
}

/* bottom bars */

const seek = ['M3 2v8M10 2v8L5 6z', 'M8 2v8L3 6z', 'M4 2v8l5-4z', 'M9 2v8M2 2v8l5-4z']

function BottomTabs() {
  return (
    <nav className="flex h-[14px] shrink-0 border-y border-[#a3a2a5] bg-[#faf8fc] text-[10px] leading-3">
      <div className="ml-px flex w-[54px] shrink-0 bg-[#a9a6c4]">
        {seek.map(d => (
          <button key={d} aria-label="Scroll tabs" className="flex flex-1 items-center justify-center border-r border-[#8886a6]">
            <Svg w={12} h={12}>
              <path d={d} stroke="#8583a5" fill="#8583a5" />
            </Svg>
          </button>
        ))}
      </div>
      <button className="w-[51px] border-r border-[#a9a8ab] font-bold text-black">Model</button>
      <button className="w-[59px] border-r border-[#a9a8ab] bg-[#d9d7db]">3D Views</button>
      <button className="w-[96px] border-r border-[#a9a8ab] bg-[#d9d7db] pl-2 text-left">Motion Study 1</button>
    </nav>
  )
}

function StatusBar() {
  return (
    <footer className="flex h-[15px] shrink-0 items-center border-b border-[#6f9a9e] bg-[#faf8fc] text-[10px] leading-[14px]">
      <span>Part1</span>
      <span className="ml-auto">Under Defined</span>
      <span className="ml-[8px] w-[84px]">Editing Sketch1</span>
      <SmallLight />
      <span className="ml-[8px]">
        <Svg w={12} h={12}>
          <path d="M1 8l4-6 3 5z" fill="#e8c83c" stroke="#555" />
          <path d="M6 9.500h5v-7l-2 2m2-2 1 2M2 11h8" stroke="#333" />
        </Svg>
      </span>
      <span className="ml-[53px]">MMGS</span>
      <span className="ml-[16px] rotate-180">
        <Caret />
      </span>
      <span className="ml-[17px]">
        <Svg w={12} h={12}>
          <path d="M1 5l6-3 4 2v4l-5 3-5-3z" fill="#ccc" stroke="#555" />
          <path d="M1 5l5 2 5-3M3 4l5 2M5 3l5 2" stroke="#777" strokeWidth=".7" />
        </Svg>
      </span>
    </footer>
  )
}

export default function App() {
  return (
    <div className="flex h-screen w-full flex-col overflow-hidden bg-[#faf8fc] font-['Open_Sans',sans-serif] text-[#303030]">
      <TitleBar />
      <Ribbon />
      <div className="relative flex flex-1 flex-col">
        <Scene />
        <div className="relative flex flex-1 flex-col">
          <RibbonTabs />
          <div className="flex flex-1">
            <FeaturePanel />
            <Viewport />
          </div>
        </div>
      </div>
      <BottomTabs />
      <StatusBar />
    </div>
  )
}
